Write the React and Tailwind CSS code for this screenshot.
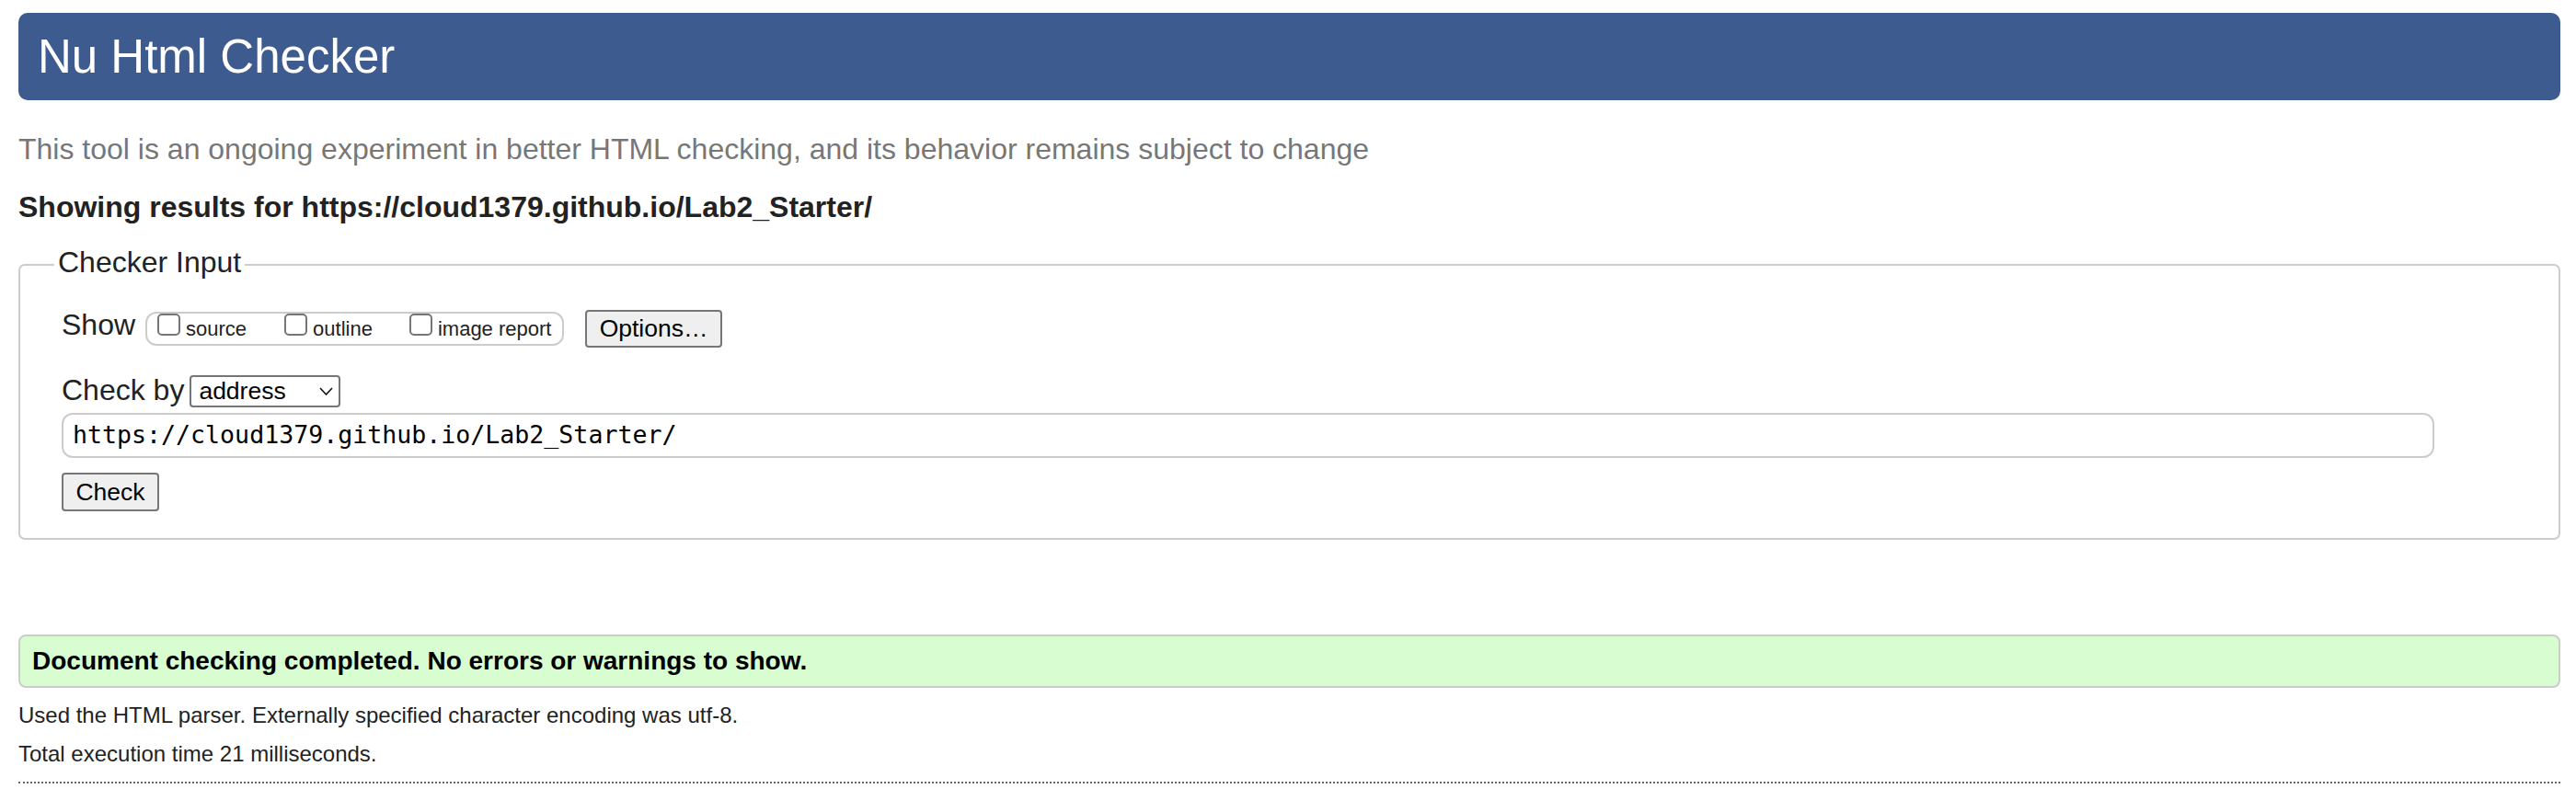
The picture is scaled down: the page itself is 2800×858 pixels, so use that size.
export default function App() {
  const Box = ({ label, ml }) => (
    <div className={`flex items-start ${ml}`}>
      <span className="h-[24px] w-[25px] rounded-[5px] border-2 border-[#767676] bg-white" />
      <span className="ml-[6px] mt-[5px] text-[22px] leading-[24px] text-[#222]">{label}</span>
    </div>
  );
  return (
    <div className="min-h-[858px] bg-white pl-[20px] pr-[17px] pt-[14px] font-['Liberation_Sans',Arial,sans-serif] text-[#222]">
      <header className="flex h-[95px] items-center rounded-[10px] bg-[#3d5b8f] pl-[21px]">
        <h1 className="text-[51px] leading-none text-white">Nu Html Checker</h1>
      </header>
      <p className="mt-[33px] text-[32px] leading-[40px] text-[#777]">
        This tool is an ongoing experiment in better HTML checking, and its behavior remains subject to change
      </p>
      <h2 className="mt-[23px] text-[32px] font-bold leading-[40px] text-[#222]">
        Showing results for https://cloud1379.github.io/Lab2_Starter/
      </h2>
      <fieldset className="mt-[22px] rounded-[7px] border-2 border-[#cccccc]">
        <legend className="ml-[37px] px-[4px] pb-[5px] text-[32px] leading-[36px] text-[#222]">Checker Input</legend>
        <div className="pl-[45px] pr-[135px] pt-[28px] pb-[29px]">
          <div className="flex items-start">
            <span className="mt-[1px] text-[32px] leading-[32px]">Show</span>
            <div className="ml-[11px] mt-[3px] flex h-[37px] w-[455px] items-start rounded-[12px] border-2 border-[#cccccc] pl-[11px]">
              <Box label="source" ml="" />
              <Box label="outline" ml="ml-[41px]" />
              <Box label="image report" ml="ml-[40px]" />
            </div>
            <button className="ml-[23px] mt-[1px] flex h-[41px] w-[149px] items-center justify-center rounded-[4px] border-2 border-[#767676] bg-[#efefef] text-[26.5px] leading-none text-black">
              Options…
            </button>
          </div>
          <div className="mt-[30px] flex items-start">
            <span className="text-[32px] leading-[32px]">Check by</span>
            <div className="ml-[6px] flex h-[35px] w-[164px] items-center justify-between rounded-[4px] border-2 border-[#767676] bg-white pl-[8px] pr-[6px] text-[26.5px] leading-none text-black">
              <span>address</span>
              <svg width="15" height="9" viewBox="0 0 15 9">
                <path d="M1 1 L7.5 8 L14 1" stroke="#111" strokeWidth="1.6" fill="none" />
              </svg>
            </div>
          </div>
          <div className="mt-[6px] flex h-[49px] w-full items-center rounded-[12px] border-2 border-[#cccccc] pl-[10px] font-['DejaVu_Sans_Mono',monospace] text-[26.6px] leading-none text-black">
            https://cloud1379.github.io/Lab2_Starter/
          </div>
          <button className="mt-[16px] flex h-[42px] w-[106px] items-center justify-center rounded-[4px] border-2 border-[#767676] bg-[#efefef] text-[26.5px] leading-none text-black">
            Check
          </button>
        </div>
      </fieldset>
      <div className="mt-[103px] flex h-[58px] items-center rounded-[8px] border-2 border-[#cccccc] bg-[#d7fdd1] pl-[13px] text-[28px] font-bold leading-none text-black">
        Document checking completed. No errors or warnings to show.
      </div>
      <p className="mt-[13px] text-[24px] leading-[33px] text-[#222]">
        Used the HTML parser. Externally specified character encoding was utf-8.
      </p>
      <p className="mt-[9px] text-[24px] leading-[33px] text-[#222]">Total execution time 21 milliseconds.</p>
      <div className="mt-[14px] border-t-2 border-dotted border-[#666]" />
    </div>
  );
}
